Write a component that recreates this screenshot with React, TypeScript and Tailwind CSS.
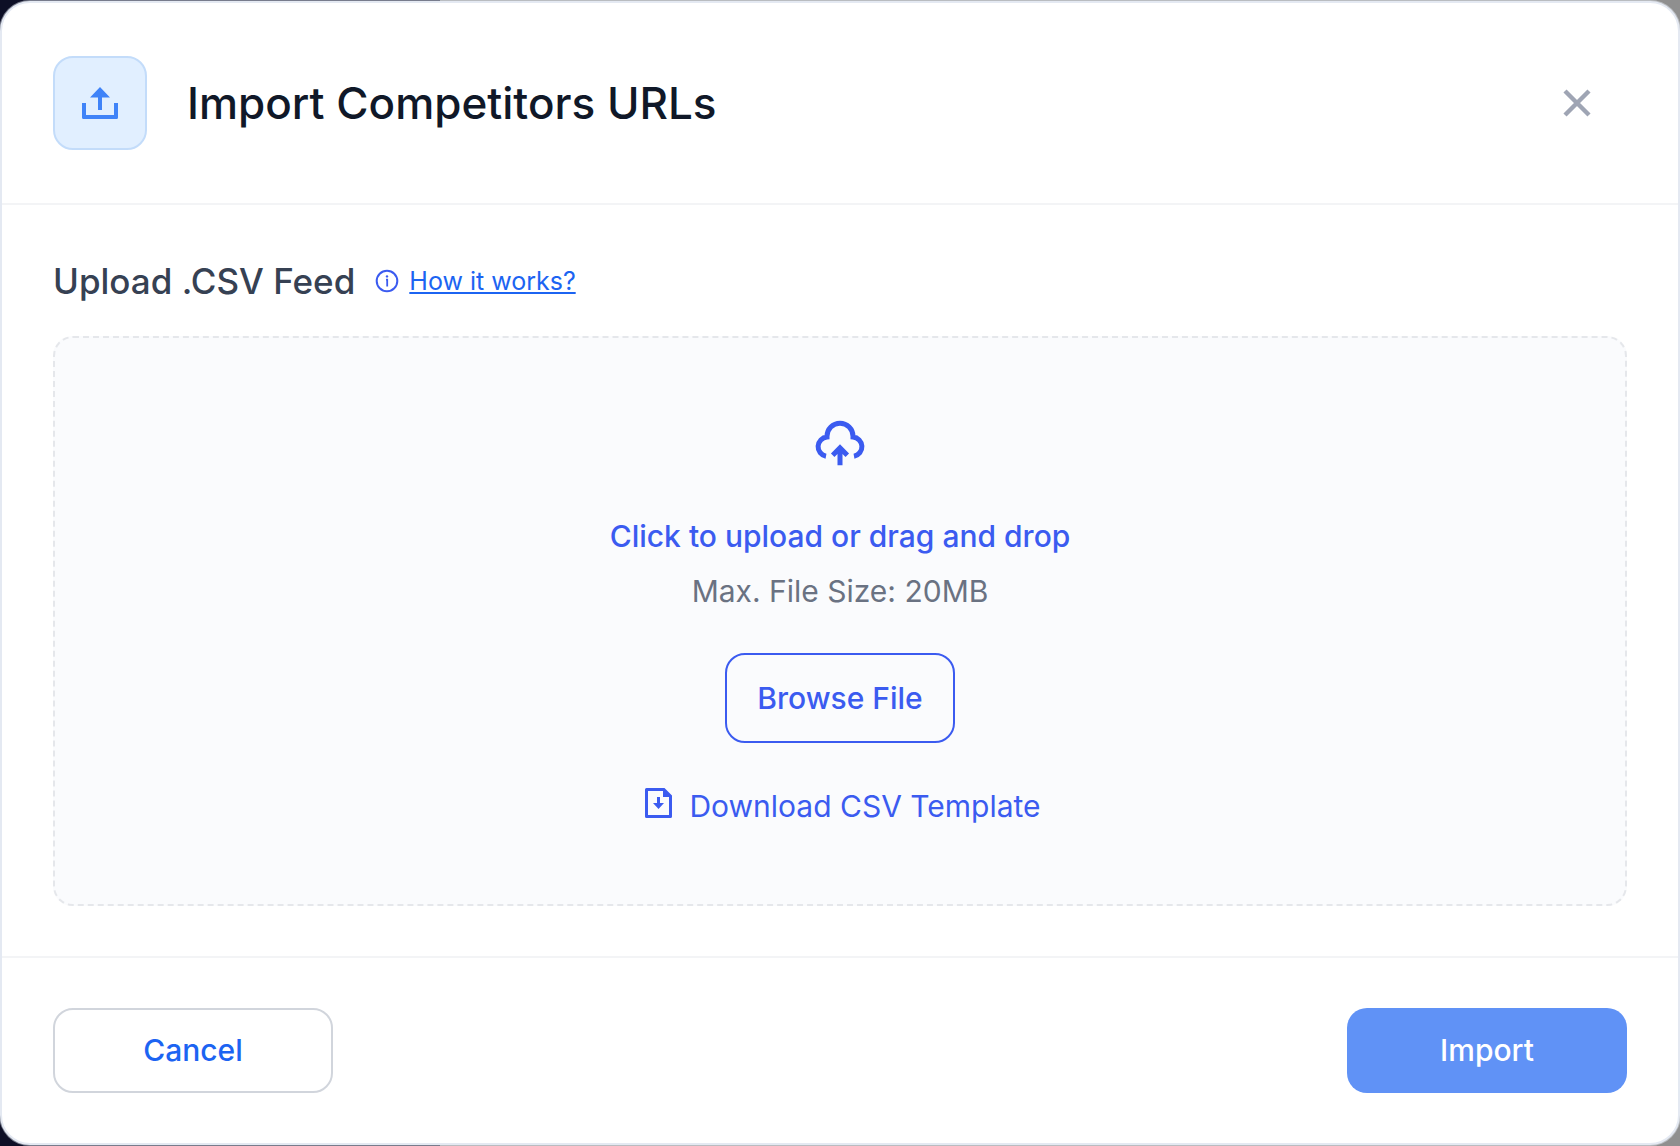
import { useRef, useState } from 'react';

function UploadTrayIcon() {
  return (
    <svg width="36" height="32" viewBox="0 0 36 32" fill="#3f83f8" aria-hidden="true">
      <path d="M18 0 28 10.500H20V23H16V10.500H8Z" />
      <path d="M0 16H4V28H32V16H36V30.500Q36 32 34.500 32H1.500Q0 32 0 30.500Z" />
    </svg>
  );
}

function CloudUploadIcon() {
  return (
    <svg width="62" height="62" viewBox="0 0 62 62" fill="none" stroke="#3b5bf0" strokeWidth="5" aria-hidden="true">
      <path d="M17 43.200A9.700 9.700 0 0 1 18 24V23.200A13 13 0 0 1 44 23.200V24A9.700 9.700 0 0 1 45 43.200" />
      <path d="M23.700 42.200 31 34.900 38.300 42.200M31 35.500V52.300" />
    </svg>
  );
}

function InfoIcon() {
  return (
    <svg width="24" height="24" viewBox="0 0 24 24" fill="none" stroke="#3b5bf0" strokeWidth="2" aria-hidden="true">
      <circle cx="12" cy="12" r="10.300" />
      <path d="M11 10.600H12.200V17.400" strokeWidth="1.800" />
      <circle cx="12" cy="7.400" r="1.200" fill="#3b5bf0" stroke="none" />
    </svg>
  );
}

function FileDownloadIcon() {
  return (
    <svg width="34" height="36" viewBox="-6 0 34 36" fill="#3b5bf0" aria-hidden="true">
      <path
        fillRule="evenodd"
        d="M1.500 0H19.500L27 7.500V28.500Q27 30 25.500 30H1.500Q0 30 0 28.500V1.500Q0 0 1.500 0ZM3 3V27H24V9H18V3Z"
      />
      <path d="M12 9H15V15H19L13.500 21 8 15H12Z" />
    </svg>
  );
}

export default function App() {
  const inputRef = useRef<HTMLInputElement>(null);
  const [fileName, setFileName] = useState('');

  const openPicker = () => inputRef.current?.click();

  return (
    <div className="flex min-h-screen flex-col bg-[linear-gradient(to_right,#0d0f26_440px,#8f8f8f_440px)] py-px font-['Inter',sans-serif]">
      <div
        role="dialog"
        aria-labelledby="import-title"
        className="flex flex-1 flex-col rounded-[30px] border-2 border-[#e4e9f2] bg-white ring-1 ring-[#e4e9f2]/50"
      >
        <header className="flex items-center border-b-2 border-gray-100 px-[51px] py-[53px]">
          <div className="flex size-[94px] items-center justify-center rounded-[20px] border-2 border-[#c3dcfa] bg-[#e1efff]">
            <UploadTrayIcon />
          </div>
          <h1 id="import-title" className="ml-10 text-[44px] leading-[56px] font-medium text-gray-900">
            Import Competitors URLs
          </h1>
          <button type="button" aria-label="Close" className="mr-[18px] ml-auto flex size-16 items-center justify-center">
            <svg width="28" height="28" viewBox="0 0 28 28" stroke="#9fa5b4" strokeWidth="4.400" aria-hidden="true">
              <path d="M2 2 26 26M26 2 2 26" />
            </svg>
          </button>
        </header>

        <main className="flex flex-1 flex-col px-[51px] py-[50px]">
          <div className="mb-[29px] flex items-center">
            <h2 className="text-[35px] leading-[52px] font-medium text-gray-700">Upload .CSV Feed</h2>
            <a href="#how-it-works" className="ml-5 flex items-center gap-[10px] text-[25px] leading-[40px] text-[#1c64f2] underline">
              <InfoIcon />
              How it works?
            </a>
          </div>

          <div className="flex flex-1 flex-col items-center rounded-[20px] border-2 border-dashed border-gray-200 bg-[#fafbfd] pt-[75px] pb-[74px] text-[30px] leading-[46px] text-[#3b5bf0]">
            <CloudUploadIcon />
            <label htmlFor="csv-file" className="mt-[38px] font-medium">
              {fileName || 'Click to upload or drag and drop'}
            </label>
            <input
              ref={inputRef}
              id="csv-file"
              type="file"
              accept=".csv"
              className="hidden"
              onChange={e => setFileName(e.target.files?.[0]?.name ?? '')}
            />
            <p className="mt-[9px] text-gray-500">Max. File Size: 20MB</p>
            <button
              type="button"
              onClick={openPicker}
              className="mt-[39px] h-[90px] rounded-[20px] border-2 border-[#3b5bf0] px-[30px] font-medium"
            >
              Browse File
            </button>
            <a href="#template" className="mt-10 flex items-center gap-4">
              <FileDownloadIcon />
              Download CSV Template
            </a>
          </div>
        </main>

        <footer className="flex justify-between border-t-2 border-gray-100 px-[51px] py-[50px] text-[30px] font-medium">
          <button type="button" className="h-[85px] w-[280px] rounded-[20px] border-2 border-gray-300 text-[#1c64f2]">
            Cancel
          </button>
          <button type="button" className="h-[85px] w-[280px] rounded-[20px] bg-[#6092f6] text-white">
            Import
          </button>
        </footer>
      </div>
    </div>
  );
}
